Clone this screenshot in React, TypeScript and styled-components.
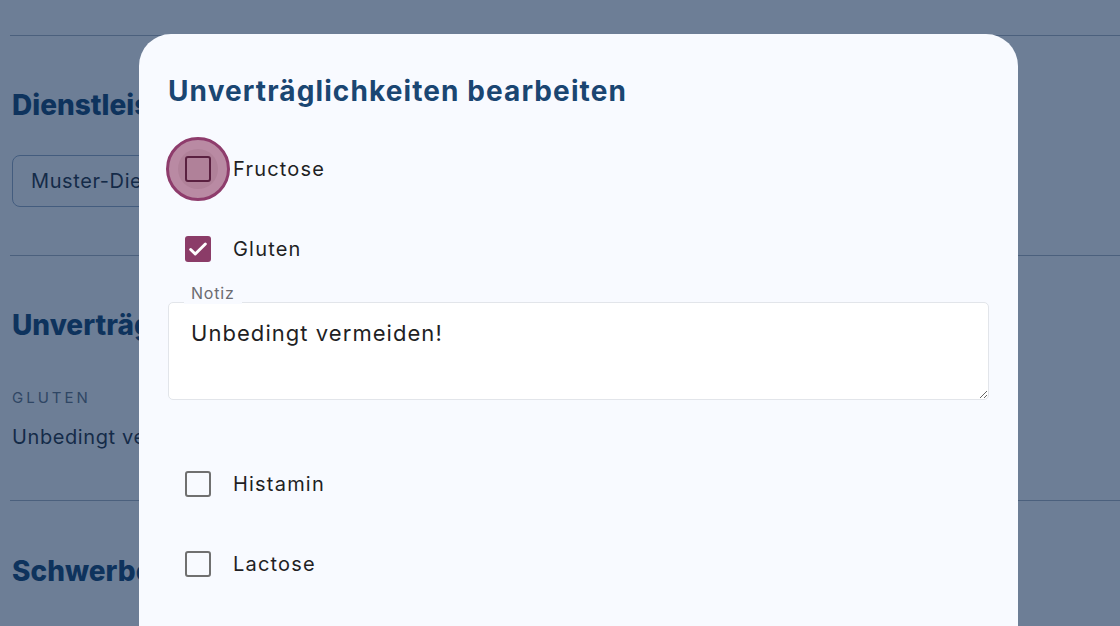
import React from "react";
import styled, { createGlobalStyle } from "styled-components";

const Global = createGlobalStyle`
  html, body { margin: 0; padding: 0; }
  body {
    width: 1120px;
    height: 626px;
    overflow: hidden;
    font-family: Inter, "Open Sans", "Liberation Sans", sans-serif;
    background: #f8faff;
  }
`;

const Page = styled.div`
  padding: 35px 0 0 10px;
  display: flex;
  flex-direction: column;
`;

const Divider = styled.hr`
  border: none;
  border-top: 1px solid #a3b0c0;
  margin: 0;
`;

const Section = styled.section`
  display: flex;
  flex-direction: column;
  padding: 0 2px;
`;

const SectionTitle = styled.h2<{ $top?: number }>`
  font-size: 28px;
  font-weight: 800;
  color: #0b3f70;
  margin: ${(p) => p.$top ?? 52}px 0 0;
  line-height: 34px;
`;

const FakeInput = styled.div`
  margin-top: 33px;
  margin-bottom: 48px;
  width: 300px;
  height: 50px;
  border: 1px solid #8ea6c4;
  border-radius: 8px;
  display: flex;
  align-items: center;
  padding-left: 18px;
  font-size: 20px;
  color: #1b2b3d;
  letter-spacing: 0.6px;
`;

const Caption = styled.div`
  margin-top: 46px;
  font-size: 15px;
  letter-spacing: 3px;
  color: #5d6f82;
`;

const Value = styled.div`
  margin-top: 18px;
  margin-bottom: 51px;
  font-size: 20px;
  letter-spacing: 0.6px;
  color: #1b2b3d;
`;

const Backdrop = styled.div`
  position: fixed;
  inset: 0;
  background: rgba(16, 44, 80, 0.6);
`;

const Dialog = styled.div`
  position: fixed;
  left: 139px;
  top: 34px;
  width: 879px;
  height: 700px;
  background: #f8faff;
  border-radius: 32px;
  padding: 38px 29px 0;
  box-sizing: border-box;
  display: flex;
  flex-direction: column;
`;

const Title = styled.h1`
  margin: 0;
  font-size: 28px;
  font-weight: 700;
  color: #1a4672;
  line-height: 38px;
  letter-spacing: 1.1px;
`;

const Options = styled.div`
  display: flex;
  flex-direction: column;
  margin-top: 19px;
`;

const Row = styled.label`
  display: flex;
  align-items: center;
  height: 80px;
  margin-left: -2px;
  gap: 3px;
`;

const BoxArea = styled.div<{ $focus?: boolean }>`
  width: 64px;
  height: 64px;
  border-radius: 50%;
  display: flex;
  align-items: center;
  justify-content: center;
  box-sizing: border-box;
  position: relative;
  ${(p) =>
    p.$focus
      ? `background: #b98aa3; border: 3px solid #8e3c6c;
         &::before { content: ""; position: absolute; width: 40px; height: 40px; border-radius: 50%; background: #b08199; }`
      : ""}
`;

const Box = styled.div<{ $checked?: boolean; $focus?: boolean }>`
  position: relative;
  width: 26px;
  height: 26px;
  box-sizing: border-box;
  border-radius: 3px;
  border: ${(p) => (p.$checked ? "none" : `2.5px solid ${p.$focus ? "#5a2040" : "#707070"}`)};
  background: ${(p) => (p.$checked ? "#8b3c68" : "transparent")};
  display: flex;
  align-items: center;
  justify-content: center;
`;

const LabelText = styled.span`
  font-size: 20px;
  color: #1f1f24;
  letter-spacing: 1.2px;
`;

const Field = styled.div`
  position: relative;
  margin: 13px 0 0;
  height: 98px;
  display: flex;
`;

const FieldLabel = styled.span`
  position: absolute;
  left: 16px;
  top: -20px;
  padding: 0 7px;
  background: #f8faff;
  font-size: 16px;
  color: #6b6b70;
  letter-spacing: 0.8px;
  line-height: 22px;
`;

const Area = styled.textarea`
  flex: 1;
  margin: 0;
  resize: vertical;
  border: 1px solid #e2e5ea;
  border-radius: 5px;
  background: #ffffff;
  padding: 17px 22px;
  font-family: inherit;
  font-size: 22px;
  color: #1f1f24;
  letter-spacing: 1.05px;
  outline: none;
`;

const Spacer = styled.div`
  height: 44px;
`;

const Check = () => (
  <svg width="22" height="22" viewBox="0 0 24 24" fill="none">
    <path d="M4 12.5l5 5L20 6.5" stroke="#fff" strokeWidth="3.2" strokeLinecap="round" strokeLinejoin="round" />
  </svg>
);

type Item = { name: string; checked?: boolean; focus?: boolean };

const Option = ({ name, checked, focus }: Item) => (
  <Row>
    <BoxArea $focus={focus}>
      <Box $checked={checked} $focus={focus}>
        {checked && <Check />}
      </Box>
    </BoxArea>
    <LabelText>{name}</LabelText>
  </Row>
);

export default function App() {
  return (
    <>
      <Global />
      <Page aria-hidden="true">
        <Divider />
        <Section>
          <SectionTitle>Dienstleister</SectionTitle>
          <FakeInput>Muster-Dienstleister</FakeInput>
        </Section>
        <Divider />
        <Section>
          <SectionTitle>Unverträglichkeiten</SectionTitle>
          <Caption>GLUTEN</Caption>
          <Value>Unbedingt vermeiden!</Value>
        </Section>
        <Divider />
        <Section>
          <SectionTitle $top={53}>Schwerbehinderung</SectionTitle>
        </Section>
      </Page>
      <Backdrop />
      <Dialog role="dialog">
        <Title>Unverträglichkeiten bearbeiten</Title>
        <Options>
          <Option name="Fructose" focus />
          <Option name="Gluten" checked />
          <Field>
            <FieldLabel>Notiz</FieldLabel>
            <Area defaultValue="Unbedingt vermeiden!" />
          </Field>
          <Spacer />
          <Option name="Histamin" />
          <Option name="Lactose" />
        </Options>
      </Dialog>
    </>
  );
}
